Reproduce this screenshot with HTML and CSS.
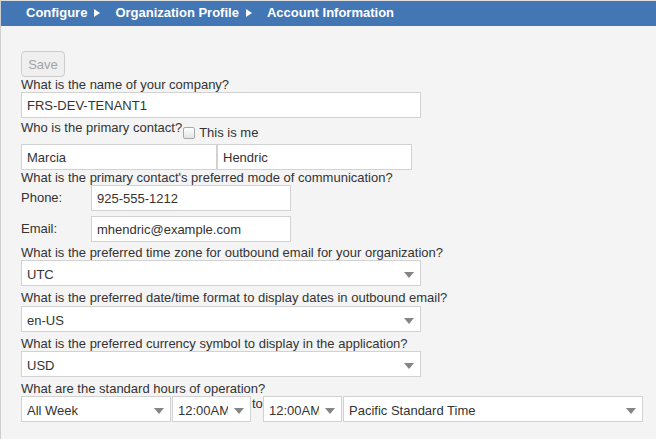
FILE: index.html
```html
<!DOCTYPE html>
<html lang="en">
<head>
<meta charset="utf-8">
<title>Account Information</title>
<link rel="stylesheet" href="styles.css">
</head>
<body>
<div class="header">
  <span class="crumb">Configure</span><span class="sep"></span>
  <span class="crumb">Organization Profile</span><span class="sep"></span>
  <span class="crumb">Account Information</span>
</div>
<div class="content">
  <button class="btn" disabled>Save</button>

  <div class="q q-first">What is the name of your company?</div>
  <input class="field w400" type="text" value="FRS-DEV-TENANT1">

  <div class="who">
    <span class="who-label">Who is the primary contact?</span>
    <input class="check" type="checkbox" id="me">
    <label class="me" for="me">This is me</label>
  </div>
  <div class="names">
    <input class="field w196" type="text" value="Marcia">
    <input class="field w195" type="text" value="Hendric">
  </div>

  <div class="q q-mode">What is the primary contact's preferred mode of communication?</div>
  <div class="contact-row">
    <span class="contact-label">Phone:</span>
    <input class="field w200" type="text" value="925-555-1212">
  </div>
  <div class="contact-row gap5">
    <span class="contact-label">Email:</span>
    <input class="field w200" type="text" value="mhendric@example.com">
  </div>

  <div class="q q-tz">What is the preferred time zone for outbound email for your organization?</div>
  <div class="select w400"><span class="val">UTC</span><svg class="arrow" viewBox="0 0 10 6"><polygon points="0,0 10,0 5,6"/></svg></div>

  <div class="q q-mb">What is the preferred date/time format to display dates in outbound email?</div>
  <div class="select w400"><span class="val">en-US</span><svg class="arrow" viewBox="0 0 10 6"><polygon points="0,0 10,0 5,6"/></svg></div>

  <div class="q">What is the preferred currency symbol to display in the application?</div>
  <div class="select w400"><span class="val">USD</span><svg class="arrow" viewBox="0 0 10 6"><polygon points="0,0 10,0 5,6"/></svg></div>

  <div class="q">What are the standard hours of operation?</div>
  <div class="hours">
    <div class="select w150 mr1"><span class="val">All Week</span><svg class="arrow" viewBox="0 0 10 6"><polygon points="0,0 10,0 5,6"/></svg></div>
    <div class="select w79"><span class="val">12:00AM</span><svg class="arrow" viewBox="0 0 10 6"><polygon points="0,0 10,0 5,6"/></svg></div>
    <span class="to">to</span>
    <div class="select w79 mr1"><span class="val">12:00AM</span><svg class="arrow" viewBox="0 0 10 6"><polygon points="0,0 10,0 5,6"/></svg></div>
    <div class="select w300"><span class="val">Pacific Standard Time</span><svg class="arrow" viewBox="0 0 10 6"><polygon points="0,0 10,0 5,6"/></svg></div>
  </div>
</div>
</body>
</html>
```
FILE: styles.css
```css
html, body {
  height: 100%;
}
body {
  margin: 0;
  box-sizing: border-box;
  background: #f4f4f4;
  border-top: 1px solid #dedede;
  border-left: 1px solid #cfcfcf;
  font-family: "Liberation Sans", Arial, sans-serif;
  font-size: 13px;
  line-height: 15px;
  color: #333;
}
.header {
  height: 25px;
  box-sizing: border-box;
  padding: 0 0 2px 25px;
  background: #4376b4;
  color: #fff;
  font-weight: bold;
  display: flex;
  align-items: center;
  line-height: 15px;
}
.sep {
  width: 0;
  height: 0;
  border-left: 6px solid #fff;
  border-top: 4px solid transparent;
  border-bottom: 4px solid transparent;
  margin: 0 15px 0 7px;
}
.content {
  padding: 25px 20px 0 20px;
}
.btn {
  display: flex;
  align-items: center;
  justify-content: center;
  width: 44px;
  height: 26px;
  box-sizing: border-box;
  padding: 0;
  border: 1px solid #cdcdcd;
  border-radius: 4px;
  background: #efefef;
  color: #a3a3a3;
  font-family: inherit;
  font-size: 13px;
}
.q {
  line-height: 15px;
  padding-top: 4px;
}
.q-first {
  padding-top: 0;
}
.q-mode {
  padding-top: 1px;
  line-height: 14px;
}
.q-tz {
  padding-top: 3px;
}
.q-mb {
  margin-bottom: 1px;
}
.field {
  display: block;
  flex: none;
  height: 26px;
  box-sizing: border-box;
  margin: 0;
  padding: 0 5px;
  border: 1px solid #d2d2d2;
  border-radius: 0;
  background: #fff;
  color: #333;
  font-family: inherit;
  font-size: 13px;
  line-height: 24px;
  outline: none;
}
.w400 { width: 400px; }
.w196 { width: 196px; }
.w195 { width: 195px; }
.w200 { width: 200px; }
.w150 { width: 150px; }
.w79 { width: 79px; }
.w300 { width: 300px; }
.mr1 { margin-right: 1px; }

.who {
  display: flex;
  align-items: flex-start;
  height: 26px;
  box-sizing: border-box;
  padding-top: 2px;
  line-height: 15px;
}
.check {
  appearance: none;
  -webkit-appearance: none;
  flex: none;
  width: 12px;
  height: 12px;
  box-sizing: border-box;
  margin: 7px 4px 0 1px;
  border: 1px solid #a9a9a9;
  border-radius: 2px;
  background: linear-gradient(#ffffff, #e4e4e4);
}
.me {
  padding-top: 5px;
}
.names {
  display: flex;
}
.contact-row {
  display: flex;
  align-items: center;
}
.gap5 {
  margin-top: 5px;
}
.contact-label {
  width: 70px;
  flex: none;
  padding-bottom: 2px;
}
.select {
  display: flex;
  flex: none;
  align-items: center;
  height: 26px;
  box-sizing: border-box;
  padding: 0 6px 0 5px;
  border: 1px solid #d2d2d2;
  background: #fff;
  color: #333;
}
.val {
  flex: 1;
  min-width: 0;
  overflow: hidden;
  white-space: nowrap;
  padding-top: 2px;
  line-height: 21px;
}
.arrow {
  flex: none;
  width: 10px;
  height: 6px;
  margin: 3px 0 0 6px;
  fill: #858585;
}
.hours {
  display: flex;
  align-items: flex-start;
}
.to {
  flex: none;
  width: 11px;
  padding-left: 1px;
  line-height: 15px;
}
```
